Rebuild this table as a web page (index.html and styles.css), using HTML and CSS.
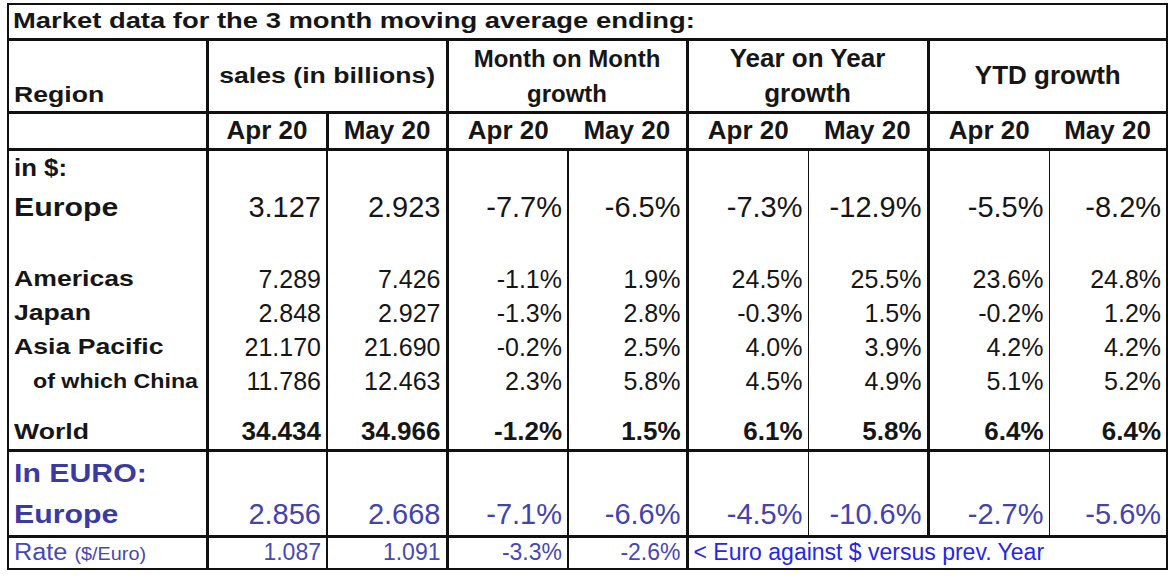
FILE: index.html
```html
<!DOCTYPE html>
<html>
<head>
<meta charset="utf-8">
<link rel="stylesheet" href="styles.css">
</head>
<body>
<table class="mkt">
  <colgroup>
    <col class="c-region">
    <col class="c-120">
    <col class="c-120">
    <col class="c-121">
    <col class="c-119">
    <col class="c-121">
    <col class="c-120">
    <col class="c-121">
    <col class="c-118">
  </colgroup>
  <thead>
    <tr class="r-title">
      <td colspan="9" class="title"><span class="wide">Market data for the 3 month moving average ending:</span></td>
    </tr>
    <tr class="r-head">
      <th class="h-region b3"><span class="wide">Region</span></th>
      <th colspan="2" class="h-sales b3"><span class="wide wide-c">sales (in billions)</span></th>
      <th colspan="2" class="h-grp h-mom b3">Month on Month<br>growth</th>
      <th colspan="2" class="h-grp h-yoy b3">Year on Year<br>growth</th>
      <th colspan="2" class="h-grp h-ytd">YTD growth</th>
    </tr>
    <tr class="r-sub">
      <th class="b3"></th>
      <th class="b3">Apr 20</th>
      <th class="b3">May 20</th>
      <th>Apr 20</th>
      <th class="b3">May 20</th>
      <th>Apr 20</th>
      <th class="b3">May 20</th>
      <th>Apr 20</th>
      <th>May 20</th>
    </tr>
  </thead>
  <tbody class="usd">
    <tr class="h38"><td class="lbl lbl-in"><span class="wide">in $:</span></td><td></td><td></td><td></td><td></td><td></td><td></td><td></td><td></td></tr>
    <tr class="h40 big"><td class="lbl lbl-big"><span class="wide">Europe</span></td><td>3.127</td><td>2.923</td><td>-7.7%</td><td>-6.5%</td><td>-7.3%</td><td>-12.9%</td><td>-5.5%</td><td>-8.2%</td></tr>
    <tr class="h35"><td></td><td></td><td></td><td></td><td></td><td></td><td></td><td></td><td></td></tr>
    <tr class="h34"><td class="lbl"><span class="wide">Americas</span></td><td>7.289</td><td>7.426</td><td>-1.1%</td><td>1.9%</td><td>24.5%</td><td>25.5%</td><td>23.6%</td><td>24.8%</td></tr>
    <tr class="h34"><td class="lbl"><span class="wide">Japan</span></td><td>2.848</td><td>2.927</td><td>-1.3%</td><td>2.8%</td><td>-0.3%</td><td>1.5%</td><td>-0.2%</td><td>1.2%</td></tr>
    <tr class="h34"><td class="lbl"><span class="wide">Asia Pacific</span></td><td>21.170</td><td>21.690</td><td>-0.2%</td><td>2.5%</td><td>4.0%</td><td>3.9%</td><td>4.2%</td><td>4.2%</td></tr>
    <tr class="h34"><td class="lbl lbl-sub"><span class="wide">of which China</span></td><td>11.786</td><td>12.463</td><td>2.3%</td><td>5.8%</td><td>4.5%</td><td>4.9%</td><td>5.1%</td><td>5.2%</td></tr>
    <tr class="h17"><td></td><td></td><td></td><td></td><td></td><td></td><td></td><td></td><td></td></tr>
    <tr class="h35 tot"><td class="lbl"><span class="wide">World</span></td><td>34.434</td><td>34.966</td><td>-1.2%</td><td>1.5%</td><td>6.1%</td><td>5.8%</td><td>6.4%</td><td>6.4%</td></tr>
  </tbody>
  <tbody class="eur">
    <tr class="h45"><td class="lbl lbl-big"><span class="wide">In EURO:</span></td><td></td><td></td><td></td><td></td><td></td><td></td><td></td><td></td></tr>
    <tr class="h41 big"><td class="lbl lbl-big"><span class="wide">Europe</span></td><td>2.856</td><td>2.668</td><td>-7.1%</td><td>-6.6%</td><td>-4.5%</td><td>-10.6%</td><td>-2.7%</td><td>-5.6%</td></tr>
  </tbody>
  <tbody class="rate">
    <tr class="h33">
      <td class="lbl"><span class="wide">Rate <small>(&#36;/Euro)</small></span></td>
      <td>1.087</td><td>1.091</td><td>-3.3%</td><td>-2.6%</td>
      <td colspan="4" class="note">&lt; Euro against &#36; versus prev. Year</td>
    </tr>
  </tbody>
</table>
</body>
</html>
```
FILE: styles.css
```css
html, body {
  margin: 0;
  background: #ffffff;
}
body {
  padding: 3px 0 0 7px;
  font-family: "Liberation Sans", Arial, sans-serif;
  color: #161616;
}
.mkt {
  border-collapse: collapse;
  table-layout: fixed;
  width: 1161px;
  border: 2px solid #111;
}
.c-region { width: 199px; }
.c-120 { width: 120px; }
.c-121 { width: 121px; }
.c-119 { width: 119px; }
.c-118 { width: 118px; }

.mkt td, .mkt th {
  padding: 0 4px 0 4px;
  white-space: nowrap;
  overflow: visible;
}

.wide {
  display: inline-block;
  transform: scaleX(1.21);
  transform-origin: left center;
}
.wide-c { transform-origin: center center; }

/* title */
.r-title { height: 35px; }
.title {
  font-weight: bold;
  font-size: 22px;
  border-bottom: 3px solid #111;
  vertical-align: middle;
  padding-left: 5px;
}
.title .wide { transform: scaleX(1.245); }

/* header */
.r-head { height: 72px; }
.r-head th {
  border-bottom: 3px solid #111;
  font-weight: bold;
  vertical-align: middle;
  text-align: center;
}
.b3 { border-right: 3px solid #111; }
.mkt th.h-region {
  text-align: left;
  vertical-align: bottom;
  padding-bottom: 3px;
  padding-left: 5px;
  font-size: 22px;
}
.h-sales { font-size: 22px; }
.h-grp { line-height: 35px; }
.h-mom { font-size: 24px; }
.h-yoy { font-size: 26px; }
.h-ytd { font-size: 26px; }

.r-sub { height: 37px; }
.r-sub th {
  border-bottom: 3px solid #111;
  font-weight: bold;
  font-size: 26px;
  text-align: center;
  vertical-align: middle;
  padding: 0;
}

/* body */
.usd td, .eur td, .rate td {
  text-align: right;
  vertical-align: middle;
  font-size: 25px;
  padding-right: 5px;
}
.usd td:nth-child(1), .eur td:nth-child(1), .rate td:nth-child(1) { border-right: 3px solid #111; }
.usd td:nth-child(2), .eur td:nth-child(2), .rate td:nth-child(2) { border-right: 2px solid #111; }
.usd td:nth-child(3), .eur td:nth-child(3), .rate td:nth-child(3) { border-right: 3px solid #111; }
.usd td:nth-child(4), .eur td:nth-child(4), .rate td:nth-child(4) { border-right: 2px solid #111; }
.usd td:nth-child(5), .eur td:nth-child(5), .rate td:nth-child(5) { border-right: 3px solid #111; }
.usd td:nth-child(6), .eur td:nth-child(6) { border-right: 1px solid #111; }
.usd td:nth-child(7), .eur td:nth-child(7) { border-right: 3px solid #111; }
.usd td:nth-child(8), .eur td:nth-child(8) { border-right: 1px solid #111; }

.usd tr:last-child td, .eur tr:last-child td { border-bottom: 3px solid #111; }

.h38 { height: 38px; }
.h40 { height: 40px; }
.h35 { height: 35px; }
.h34 { height: 34px; }
.h17 { height: 17px; }
.h45 { height: 45px; }
.h41 { height: 41px; }
.h33 { height: 33px; }

.usd .big td { font-size: 29px; }
.usd .tot td { font-weight: bold; font-size: 26px; }

.eur td { color: #4343ad; font-size: 28px; }
.eur .big td { font-size: 29px; }

.rate td { color: #4848b2; font-size: 23px; }
.rate small { font-size: 18px; }

/* labels (first column) */
.mkt tbody td.lbl {
  text-align: left;
  font-weight: bold;
  font-size: 22px;
  padding-left: 5px;
}
.mkt tbody td.lbl-in { font-size: 23px; }
.mkt tbody td.lbl-in .wide { transform: scaleX(1.12); }
.mkt tbody td.lbl-big { font-size: 25px; }
.mkt tbody td.lbl-sub { font-size: 20px; padding-left: 24px; }
.mkt tbody td.lbl-sub .wide { transform: scaleX(1.16); }
.mkt .eur td.lbl { color: #3a3aa2; }
.mkt .rate td.lbl { font-weight: normal; font-size: 23px; }
.mkt .rate td.lbl .wide { transform: scaleX(1.1); }

.mkt td.note {
  text-align: left;
  color: #2626e6;
  font-size: 23px;
  padding-left: 5px;
}
```
